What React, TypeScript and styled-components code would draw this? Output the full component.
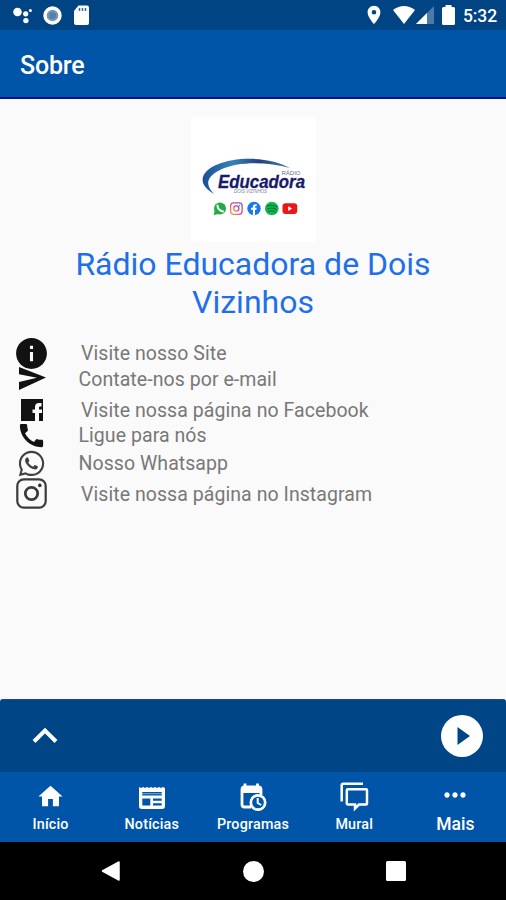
import React from 'react';
import styled, { createGlobalStyle } from 'styled-components';
import { MdCall, MdHome, MdInfo, MdLocationOn, MdMoreHoriz } from 'react-icons/md';
import { FaWhatsapp } from 'react-icons/fa';

const GlobalStyle = createGlobalStyle`
  * { box-sizing: border-box; }
  body { margin: 0; font-family: Roboto, "Noto Sans", sans-serif; }
  svg { display: block; flex: none; overflow: visible; }
`;

const Screen = styled.div`
  width: 506px;
  height: 900px;
  display: flex;
  flex-direction: column;
  overflow: hidden;
  background: #fafafa;
`;

const StatusBar = styled.header`
  flex: none;
  height: 30px;
  display: flex;
  justify-content: space-between;
  padding: 0 9px 0 12px;
  background: #004484;
  color: #fff;
`;

const StatusGroup = styled.div`
  display: flex;
  align-items: center;
`;

const LeadingIcons = styled(StatusGroup)`
  gap: 11px;
`;

const TrailingIcons = styled(StatusGroup)`
  gap: 8px;
`;

const Signals = styled.span`
  display: flex;
  align-items: center;
  gap: 1px;
`;

const Clock = styled.time`
  width: 34px;
  margin-top: 2px;
  font-size: 17.5px;
  line-height: 20px;
  font-weight: 500;
  letter-spacing: -0.1px;
`;

const AppBar = styled.div`
  flex: none;
  height: 69px;
  display: flex;
  align-items: center;
  padding: 4px 20px 0;
  background: #0055a9;
  border-bottom: 2px solid #0b0f97;
`;

const AppTitle = styled.h1`
  margin: 0;
  color: #fff;
  font-size: 25px;
  line-height: 30px;
  font-weight: 500;
  letter-spacing: -0.2px;
`;

const Content = styled.main`
  flex: 1;
  min-height: 0;
  display: flex;
  flex-direction: column;
  padding: 18px 16px 0;
`;

const LogoCard = styled.div`
  flex: none;
  align-self: center;
  width: 125px;
  height: 125px;
  background: #fff;
`;

const StationName = styled.h2`
  margin: 4px 0 0;
  color: #1f6fea;
  font-size: 32px;
  line-height: 37.5px;
  font-weight: 400;
  letter-spacing: 0;
  text-align: center;
`;

const Links = styled.ul`
  margin: 17px 0 0;
  padding: 0;
  list-style: none;
`;

const LinkRow = styled.li<{ $large?: boolean; $gap: number }>`
  height: ${p => (p.$large ? 31 : 25)}px;
  margin-top: ${p => p.$gap}px;
  display: flex;
  align-items: center;
`;

const LinkIcon = styled.span`
  flex: none;
  width: 31px;
  display: flex;
  justify-content: center;
  color: #121212;
`;

const LinkLabel = styled.span<{ $large?: boolean }>`
  margin-left: ${p => (p.$large ? 34 : 31.5)}px;
  color: #787878;
  font-size: 19.5px;
  line-height: 24px;
  letter-spacing: 0.06px;
  white-space: nowrap;
`;

const Player = styled.section`
  flex: none;
  height: 73px;
  display: flex;
  align-items: center;
  justify-content: space-between;
  padding: 0 23px 0 32px;
  background: #004586;
  border-top: 1px solid #174c83;
  border-radius: 3px 3px 0 0;
`;

const IconButton = styled.button`
  padding: 0;
  border: 0;
  background: none;
`;

const TabBar = styled.nav`
  flex: none;
  height: 70px;
  display: grid;
  grid-template-columns: repeat(5, 1fr);
  background: #0055a9;
`;

const Tab = styled.a`
  display: flex;
  flex-direction: column;
  align-items: center;
  color: #fff;
`;

const TabIcon = styled.span<{ $top?: number }>`
  height: 43px;
  padding-top: ${p => p.$top ?? 9}px;
`;

const TabLabel = styled.span<{ $large?: boolean }>`
  font-size: ${p => (p.$large ? 17.5 : 14.3)}px;
  line-height: 18px;
  font-weight: 500;
  letter-spacing: ${p => (p.$large ? 0 : 0.2)}px;
`;

const SystemBar = styled.footer`
  flex: none;
  height: 58px;
  display: grid;
  grid-template-columns: 142px 1fr 142px;
  align-items: center;
  justify-items: center;
  padding: 0 39px;
  background: #000;
`;

const DotsIcon = () => (
  <svg width="20" height="18" viewBox="0 0 20 18" fill="#fff">
    <circle cx="5.5" cy="6" r="4.3" />
    <circle cx="13.7" cy="7.8" r="2.6" />
    <circle cx="13.9" cy="14.6" r="2.7" />
    <circle cx="18.4" cy="4.5" r="1.5" />
  </svg>
);

const RingIcon = () => (
  <svg width="19" height="19" viewBox="0 0 19 19">
    <circle cx="9.5" cy="9.5" r="7.5" fill="#7396b8" stroke="#fff" strokeWidth="3.4" />
    <circle cx="9.5" cy="9.5" r="3.5" fill="#5580ab" />
  </svg>
);

const CardIcon = () => (
  <svg width="16" height="20" viewBox="0 0 16 20">
    <path d="M5.5 0.500H14Q16 0.500 16 2.500V18Q16 20 14 20H3Q1 20 1 18V6Z" fill="#fff" />
    <path d="M6.500 3v3M9.500 3v3M12.500 3v3" stroke="#35679a" strokeWidth="1.5" />
  </svg>
);

const WifiIcon = () => (
  <svg width="22" height="18" viewBox="0 0 22 18">
    <path d="M0 4Q11-4 22 4L11 18Z" fill="#fff" />
  </svg>
);

const SignalIcon = () => (
  <svg width="18" height="18" viewBox="0 0 18 18">
    <path d="M18 0V18H0Z" fill="#4c7ba9" />
    <path d="M11 7V18H0Z" fill="#fff" />
  </svg>
);

const BatteryIcon = () => (
  <svg width="13" height="20" viewBox="0 0 13 20" fill="#fff">
    <path d="M3.5 2V0h6v2h2Q13 2 13 3.5v15Q13 20 11.5 20h-10Q0 20 0 18.5v-15Q0 2 1.5 2Z" />
  </svg>
);

const StationLogo = () => (
  <svg width="125" height="125" viewBox="0 0 125 125" fontFamily="Liberation Sans, sans-serif">
    <defs>
      <linearGradient id="swoosh">
        <stop offset="0" stopColor="#1c4e98" />
        <stop offset="0.35" stopColor="#3585b8" />
        <stop offset="0.65" stopColor="#233f80" />
        <stop offset="1" stopColor="#4e82b2" />
      </linearGradient>
      <linearGradient id="insta" x1="0" y1="1" x2="1" y2="0">
        <stop offset="0" stopColor="#f0a149" />
        <stop offset="0.5" stopColor="#df477d" />
        <stop offset="1" stopColor="#9249c1" />
      </linearGradient>
    </defs>
    <path d="M23 77C7 68 8 56 25 48C49 38 81 41 99 51C76 45 48 44 29 53C15 60 14 68 23 77Z" fill="url(#swoosh)" />
    <text x="90.500" y="57.500" fontSize="6" textLength="19" fill="#65738e">RÁDIO</text>
    <text x="27" y="71" fontSize="17.500" fontWeight="700" fontStyle="italic" textLength="87" lengthAdjust="spacingAndGlyphs" fill="#191b68" stroke="#191b68" strokeWidth="0.300">Educadora</text>
    <text x="43" y="76" fontSize="4.500" fontStyle="italic" textLength="33" lengthAdjust="spacingAndGlyphs" fill="#77839a">DOIS VIZINHOS</text>
    <circle cx="29" cy="91.5" r="6" fill="#20ad43" />
    <path d="M22.5 98l1.5-5 4 4Z" fill="#20ad43" />
    <path d="M26.5 88.5q0 4.5 5.5 6" fill="none" stroke="#fff" strokeWidth="2" strokeLinecap="round" />
    <rect x="39.6" y="85.8" width="11.5" height="11.5" rx="3" fill="none" stroke="url(#insta)" strokeWidth="1.3" />
    <circle cx="45.3" cy="91.5" r="2.6" fill="none" stroke="url(#insta)" strokeWidth="1.3" />
    <circle cx="48.5" cy="88.4" r=".7" fill="#b74b9c" />
    <circle cx="63" cy="91.5" r="6.7" fill="#1677ef" />
    <path d="M61.9 98v-5.2H60v-2h1.9v-1.3q0-2.7 3.8-2.2v1.8q-1.7-.2-1.7.8v.9h1.7l-.3 2H64V98Z" fill="#fff" />
    <circle cx="80.8" cy="91.5" r="6.8" fill="#12b653" />
    <path d="M76.5 89q5-2 9.3.8M77 91.7q4.5-1.5 8 .7M77.5 94.3q3.5-1 6.5.5" fill="none" stroke="#08803a" strokeWidth="1.4" strokeLinecap="round" />
    <rect x="91.5" y="86.2" width="14.7" height="10.7" rx="3" fill="#ed1616" />
    <path d="M97.2 89.2v4.8l4-2.4Z" fill="#fff" />
  </svg>
);

const SendIcon = () => (
  <svg width="25" height="25" viewBox="0 0 25 25">
    <path d="M0 0L27 10.500L0 23V15L18 10.700L0 7.200Z" fill="#111" />
  </svg>
);

const FacebookIcon = () => (
  <svg width="22" height="24" viewBox="0 0 22 24">
    <path d="M0 0H22V22H18V14H21V10.5H18V8.5Q18 7.4 19 7.4H20.5V4H18Q14 4 14 8V10.5H11.5V14H14V22H0Z" fill="#121212" />
  </svg>
);

const InstagramIcon = () => (
  <svg width="31" height="33" viewBox="0 0 31 33" fill="none" stroke="#3b3b3b">
    <rect x="1.3" y="1.3" width="28.4" height="28.4" rx="6.5" strokeWidth="2.2" />
    <circle cx="15.5" cy="15.5" r="6.2" strokeWidth="2.8" />
    <circle cx="23.8" cy="7.4" r="1.8" fill="#333" stroke="none" />
  </svg>
);

const NewsIcon = () => (
  <svg width="26" height="31" viewBox="0 0 26 31">
    <path d="M0 6l2 1 2-1 2 1 2-1 2 1 2-1 2 1 2-1 2 1 2-1 2 1 2-1 2 1v18q0 3-3 3H3q-3 0-3-3Z" fill="#fff" />
    <path d="M3.300 11h19.400v3.500H3.300ZM3.300 17.500h8v7h-8ZM14 17.500h8.700v2.200H14ZM14 22.300h8.700v2.200H14Z" fill="#0055a9" />
    <path d="M3.300 12.700h19.400" stroke="#fff" strokeWidth="0.500" />
  </svg>
);

const ScheduleIcon = () => (
  <svg width="25" height="31" viewBox="2 0 25 31">
    <path d="M7 2.500v5M19.500 2.500v5" stroke="#fff" strokeWidth="2.8" />
    <path d="M13 26H6.500Q4 26 4 23.500V8.500Q4 6 6.500 6H20.500Q23 6 23 8.500V14" fill="none" stroke="#fff" strokeWidth="2.800" />
    <path d="M4 6H23V12H4Z" fill="#fff" />
    <circle cx="20" cy="21.500" r="7.200" fill="#0055a9" stroke="#fff" strokeWidth="2.700" />
    <path d="M19.700 17v5l3.500 2" fill="none" stroke="#fff" strokeWidth="2" />
  </svg>
);

const ChatIcon = () => (
  <svg width="27" height="31" viewBox="1 0 27 31" fill="none" stroke="#fff" strokeWidth="2.500">
    <path d="M1.700 20.500V4.200Q1.700 2.700 3.200 2.700H23" />
    <path d="M8 8.200H26Q27 8.200 27 9.200V22.500Q27 23.500 26 23.500H19L15 27.500V23.500H8Q6.800 23.500 6.800 22.500V9.200Q6.800 8.200 8 8.200Z" />
  </svg>
);

const links = [
  { label: 'Visite nosso Site', large: true, gap: 0, icon: <MdInfo size={37} /> },
  { label: 'Contate-nos por e-mail', gap: -2, icon: <SendIcon /> },
  { label: 'Visite nossa página no Facebook', large: true, gap: 3, icon: <FacebookIcon /> },
  { label: 'Ligue para nós', gap: -3, icon: <MdCall size={31} /> },
  { label: 'Nosso Whatsapp', gap: 3, icon: <FaWhatsapp size={29} color="#404040" /> },
  { label: 'Visite nossa página no Instagram', large: true, gap: 3, icon: <InstagramIcon /> },
];

const tabs = [
  { label: 'Início', top: 10, icon: <MdHome size={29} /> },
  { label: 'Notícias', icon: <NewsIcon /> },
  { label: 'Programas', icon: <ScheduleIcon /> },
  { label: 'Mural', icon: <ChatIcon /> },
  { label: 'Mais', large: true, top: 7, icon: <MdMoreHoriz size={32} /> },
];

export default function App() {
  return (
    <>
      <GlobalStyle />
      <Screen>
        <StatusBar>
          <LeadingIcons><DotsIcon /><RingIcon /><CardIcon /></LeadingIcons>
          <TrailingIcons>
            <MdLocationOn size={22} />
            <Signals><WifiIcon /><SignalIcon /></Signals>
            <BatteryIcon />
            <Clock>5:32</Clock>
          </TrailingIcons>
        </StatusBar>
        <AppBar><AppTitle>Sobre</AppTitle></AppBar>
        <Content>
          <LogoCard><StationLogo /></LogoCard>
          <StationName>Rádio Educadora de Dois Vizinhos</StationName>
          <Links>
            {links.map(l => (
              <LinkRow key={l.label} $large={l.large} $gap={l.gap}>
                <LinkIcon>{l.icon}</LinkIcon>
                <LinkLabel $large={l.large}>{l.label}</LinkLabel>
              </LinkRow>
            ))}
          </Links>
        </Content>
        <Player>
          <IconButton aria-label="Expandir">
            <svg width="26" height="16" viewBox="0 0 26 16"><path d="M2 13.500L13 2.500L24 13.500" fill="none" stroke="#fff" strokeWidth="4" /></svg>
          </IconButton>
          <IconButton aria-label="Tocar">
            <svg width="42" height="42" viewBox="0 0 42 42"><circle cx="21" cy="21" r="21" fill="#fff" /><path d="M16.500 12V30L29 21Z" fill="#004586" /></svg>
          </IconButton>
        </Player>
        <TabBar>
          {tabs.map(t => (
            <Tab key={t.label}>
              <TabIcon $top={t.top}>{t.icon}</TabIcon>
              <TabLabel $large={t.large}>{t.label}</TabLabel>
            </Tab>
          ))}
        </TabBar>
        <SystemBar>
          <svg width="18" height="20" viewBox="0 0 18 20"><path d="M18 1V19L1.500 10Z" fill="#fff" stroke="#fff" strokeWidth="1.500" strokeLinejoin="round" /></svg>
          <svg width="21" height="21" viewBox="0 0 21 21"><circle cx="10.500" cy="10.500" r="10.500" fill="#fff" /></svg>
          <svg width="20" height="20" viewBox="0 0 20 20"><rect width="20" height="20" rx="1.500" fill="#fff" /></svg>
        </SystemBar>
      </Screen>
    </>
  );
}
